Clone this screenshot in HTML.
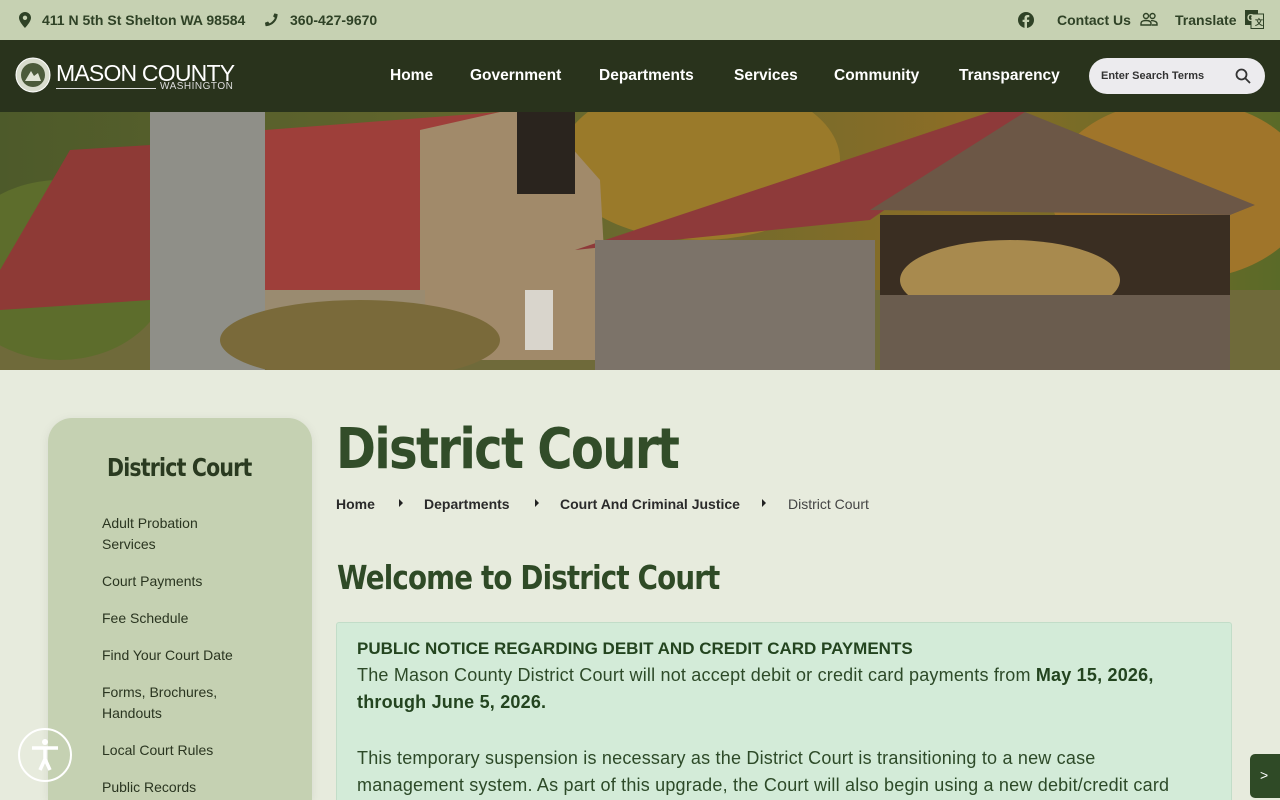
<!DOCTYPE html>
<html style="overflow:hidden;height:800px"><head><meta charset="utf-8"><style>
*{margin:0;padding:0;box-sizing:border-box}
body{width:1280px;height:800px;overflow:hidden;background:#e7ebdd;font-family:"Liberation Sans",sans-serif;position:relative}
.top{height:40px;background:#c6d1b2;color:#2f4226;font-size:14px;font-weight:bold;position:relative}
.top span{position:absolute;top:12px}
.nav{position:absolute;top:40px;left:0;width:1280px;height:72px;background:rgba(40,50,28,.93);z-index:2}
.nav .m{position:absolute;top:27px;color:#fff;font-weight:bold;font-size:15.5px}
.search{position:absolute;left:1089px;top:18px;width:176px;height:36px;border-radius:18px;background:#ecebee;font-size:11px;font-weight:bold;color:#333;padding:12px 0 0 12px}
.hero{position:absolute;top:40px;left:0;width:1280px;height:330px;overflow:hidden}
.side{position:absolute;left:48px;top:418px;width:264px;height:382px;background:#c5d1b2;border-radius:24px 24px 0 0;box-shadow:0 2px 10px rgba(0,0,0,.08)}
.side h3{position:absolute;left:59px;top:35px;font-size:25px;color:#2a3a20;font-family:"DejaVu Sans",sans-serif;font-weight:bold;letter-spacing:-1px;transform:scaleX(.82);transform-origin:left;white-space:nowrap}
.side a{position:absolute;left:54px;font-size:14px;color:#2a3520;line-height:21px;width:150px}
h1{position:absolute;left:336px;top:417px;font-size:56px;color:#324d29;font-family:"DejaVu Sans",sans-serif;font-weight:bold;letter-spacing:-2px;transform:scaleX(.86);transform-origin:left;white-space:nowrap}
h2{position:absolute;left:337px;top:558px;font-size:33px;color:#2f4a26;font-family:"DejaVu Sans",sans-serif;font-weight:bold;letter-spacing:-1px;transform:scaleX(.84);transform-origin:left;white-space:nowrap}
.bc{position:absolute;top:496px;font-size:14px;color:#2a2a2a;font-weight:bold}
.tri{position:absolute;top:499px;width:0;height:0;border-left:4px solid #222;border-top:4px solid transparent;border-bottom:4px solid transparent}
.notice{position:absolute;left:336px;top:622px;width:896px;height:178px;overflow:hidden;background:#d3ebd8;border:1px solid #c2ddc8;border-bottom:none;border-radius:3px 3px 0 0;padding:12px 30px 0 20px;color:#2d4a28;font-size:18px;line-height:27px;letter-spacing:.2px}
.notice b{color:#23441f}
.notice p.s{margin-top:29px}
</style></head><body>
<div class="top">
<svg style="position:absolute;left:19px;top:12px" width="12" height="16" viewBox="0 0 12 16"><path d="M6 0C2.7 0 0 2.6 0 5.8 0 10 6 16 6 16s6-6 6-10.2C12 2.6 9.3 0 6 0zm0 8a2.2 2.2 0 110-4.4A2.2 2.2 0 016 8z" fill="#2f4226"/></svg>
<span style="left:42px">411 N 5th St Shelton WA 98584</span>
<svg style="position:absolute;left:264px;top:12px" width="15" height="15" viewBox="0 0 16 16"><path d="M15 11.5l-3.3-1.4-1.6 2c-2.5-1.2-4.6-3.3-5.8-5.8l2-1.6L4.9 1.4 1.5 2.2C1.5 9.3 7.2 15 14.3 15z" fill="#2f4226" transform="scale(-1,1) translate(-16,0)"/></svg>
<span style="left:290px">360-427-9670</span>
<svg style="position:absolute;left:1018px;top:12px" width="16" height="16" viewBox="0 0 16 16"><circle cx="8" cy="8" r="8" fill="#2f4226"/><path d="M9 16V10h2l.3-2.3H9V6.3c0-.7.2-1.1 1.1-1.1h1.2V3.1c-.2 0-1-.1-1.8-.1-1.8 0-3 1.1-3 3.1v1.7H4.6V10h1.9v6z" fill="#c6d1b2"/></svg>
<span style="left:1057px">Contact Us</span>
<svg style="position:absolute;left:1140px;top:12px" width="18" height="15" viewBox="0 0 18 15" fill="none" stroke="#2f4226" stroke-width="1.4"><circle cx="6" cy="4" r="2.5"/><circle cx="12.5" cy="4" r="2.5"/><path d="M1 13v-1.5c0-2 2-3 5-3s5 1 5 3V13zM11 8.6c3 0 6 1 6 3V13h-5"/></svg>
<span style="left:1175px">Translate</span>
<svg style="position:absolute;left:1245px;top:10px" width="19" height="19" viewBox="0 0 19 19"><rect x="0" y="0" width="13" height="15" fill="#2f4226"/><rect x="6" y="4" width="12.5" height="14.5" fill="#c6d1b2" stroke="#2f4226"/><text x="2" y="11" font-size="10" font-weight="bold" fill="#c6d1b2" font-family="Liberation Sans">G</text><text x="10" y="15" font-size="8" fill="#2f4226" font-family="Liberation Sans">文</text></svg>
</div>
<div class="hero">
<svg width="1280" height="330" viewBox="0 0 1280 330" preserveAspectRatio="none">
<defs><linearGradient id="bg" x1="0" x2="1"><stop offset="0" stop-color="#4d5a2a"/><stop offset=".5" stop-color="#6b6a2e"/><stop offset=".75" stop-color="#8b6d26"/><stop offset="1" stop-color="#5a6a28"/></linearGradient></defs>
<rect width="1280" height="330" fill="url(#bg)"/>
<rect x="0" y="250" width="1280" height="80" fill="#6f6a3a"/>
<ellipse cx="60" cy="230" rx="110" ry="90" fill="#5d6d2c"/>
<ellipse cx="700" cy="120" rx="140" ry="80" fill="#9a7a2a"/>
<ellipse cx="1180" cy="150" rx="130" ry="90" fill="#a0752a"/>
<polygon points="0,230 70,110 150,105 150,260 0,270" fill="#8e3a36"/>
<rect x="150" y="72" width="115" height="258" fill="#8f8f88"/>
<polygon points="265,90 500,72 440,250 265,260" fill="#9e3f3a"/>
<polygon points="420,90 500,72 540,72 600,140 610,320 420,320" fill="#a18a6a"/>
<rect x="517" y="72" width="58" height="82" fill="#2a241e"/>
<rect x="265" y="250" width="160" height="70" fill="#9a8b70"/>
<rect x="525" y="250" width="28" height="60" fill="#d9d5cc"/>
<ellipse cx="360" cy="300" rx="140" ry="40" fill="#7a6a3a"/>
<polygon points="575,210 990,72 1025,72 870,180" fill="#8e3a3a"/>
<polygon points="870,170 1025,72 1255,165 1230,175" fill="#6c5746"/>
<rect x="595" y="200" width="280" height="130" fill="#7c7369"/>
<rect x="880" y="175" width="350" height="155" fill="#3a2e22"/>
<ellipse cx="1010" cy="240" rx="110" ry="40" fill="#a88a4e"/>
<rect x="880" y="255" width="350" height="75" fill="#6a5c4e"/>
<rect x="0" y="0" width="1280" height="72" fill="#3a4626"/>
</svg>
</div>
<div class="nav">
<svg style="position:absolute;left:15px;top:17px" width="36" height="36" viewBox="0 0 36 36"><circle cx="18" cy="18" r="17" fill="#d8dccd" stroke="#fff"/><circle cx="18" cy="18" r="12" fill="#4b5a3a"/><path d="M10 24h16l-3-8-4 3-3-5z" fill="#dfe3d4"/></svg>
<div style="position:absolute;left:56px;top:20px;color:#fff;font-size:23px;letter-spacing:-.8px">MASON COUNTY</div>
<div style="position:absolute;left:56px;top:48px;width:100px;height:1px;background:#ddd"></div>
<div style="position:absolute;left:160px;top:41px;color:#ddd;font-size:10px;letter-spacing:.5px">WASHINGTON</div>
<span class="m" style="left:390px">Home</span>
<span class="m" style="left:470px">Government</span>
<span class="m" style="left:599px">Departments</span>
<span class="m" style="left:734px">Services</span>
<span class="m" style="left:834px">Community</span>
<span class="m" style="left:959px">Transparency</span>
<div class="search">Enter Search Terms
<svg style="position:absolute;left:146px;top:10px" width="16" height="16" viewBox="0 0 16 16" fill="none" stroke="#333" stroke-width="1.8"><circle cx="6.5" cy="6.5" r="5"/><path d="M10 10l5 5"/></svg></div>
</div>
<div class="side">
<h3>District Court</h3>
<a style="top:95px">Adult Probation Services</a>
<a style="top:153px">Court Payments</a>
<a style="top:190px">Fee Schedule</a>
<a style="top:227px">Find Your Court Date</a>
<a style="top:264px;width:130px">Forms, Brochures, Handouts</a>
<a style="top:322px">Local Court Rules</a>
<a style="top:359px">Public Records</a>
</div>
<h1>District Court</h1>
<span class="bc" style="left:336px">Home</span><i class="tri" style="left:399px"></i>
<span class="bc" style="left:424px">Departments</span><i class="tri" style="left:535px"></i>
<span class="bc" style="left:560px">Court And Criminal Justice</span><i class="tri" style="left:762px"></i>
<span class="bc" style="left:788px;font-weight:normal;color:#444">District Court</span>
<h2>Welcome to District Court</h2>
<div class="notice"><p><b style="font-size:17px;letter-spacing:0">PUBLIC NOTICE REGARDING DEBIT AND CREDIT CARD PAYMENTS</b><br>The Mason County District Court will not accept debit or credit card payments from <b>May 15, 2026, through June 5, 2026.</b></p><p class="s">This temporary suspension is necessary as the District Court is transitioning to a new case management system. As part of this upgrade, the Court will also begin using a new debit/credit card processing vendor that operates through the court system.</p></div>
<svg style="position:absolute;left:17px;top:727px" width="56" height="56" viewBox="0 0 56 56"><circle cx="28" cy="28" r="26" fill="none" stroke="#fff" stroke-width="2"/><circle cx="28" cy="15" r="3" fill="#fff"/><path d="M15 21h26M28 21v11l-5 11M28 32l5 11" stroke="#fff" stroke-width="3.5" fill="none"/></svg>
<div style="position:absolute;left:1250px;top:754px;width:30px;height:44px;background:#2f4a26;border-radius:5px 0 0 5px;color:#fff;font-size:14px;padding:13px 0 0 10px">&gt;</div>
</body></html>
